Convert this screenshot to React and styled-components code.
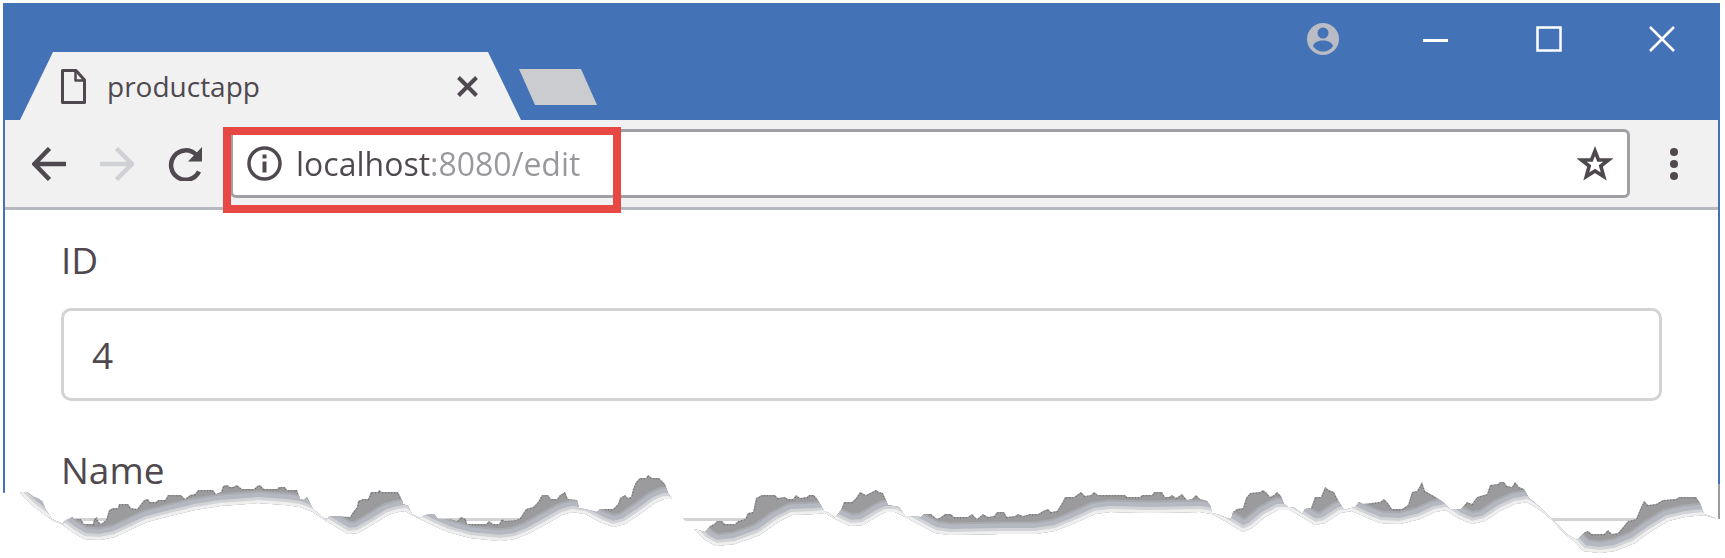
import React from "react";
import styled, { createGlobalStyle } from "styled-components";

const BLUE = "#4472b6";
const INK = "#4f494f";
const CHROME = "#f1f1f1";

const GlobalStyle = createGlobalStyle`
  *, *::before, *::after { box-sizing: border-box; }
  body {
    margin: 0;
    background: #fff;
    color: ${INK};
    font-family: "Open Sans", "Noto Sans", sans-serif;
  }
  button, input { font: inherit; color: inherit; }
`;

const Page = styled.div`
  position: relative;
  padding: 3px 5px 0 3px;
  overflow: hidden;
`;

const BrowserWindow = styled.div`
  border: solid ${BLUE};
  border-width: 0 2px;
`;

const TitleBar = styled.header`
  display: flex;
  align-items: flex-end;
  height: 117px;
  padding-left: 15px;
  background: ${BLUE};
`;

const IconButton = styled.button`
  display: flex;
  align-items: center;
  justify-content: center;
  flex: none;
  width: ${(p) => p.$width || "auto"};
  height: ${(p) => p.$height || "auto"};
  padding: 0;
  border: 0;
  background: none;
  color: ${(p) => p.$color || INK};
`;

const Tab = styled.div`
  display: flex;
  align-items: center;
  gap: 21px;
  flex: 0 1 501px;
  height: 68px;
  padding: 0 43px 0 41px;
  background: ${CHROME};
  clip-path: polygon(33px 0, calc(100% - 33px) 0, 100% 100%, 0 100%);
`;

const TabTitle = styled.span`
  flex: 1;
  font-size: 28px;
  line-height: 40px;
`;

const NewTab = styled.button`
  width: 78px;
  height: 36px;
  margin: 0 0 15px -2px;
  padding: 0;
  border: 0;
  background: #cbccd0;
  clip-path: polygon(0 0, 62px 0, 100% 100%, 16px 100%);
`;

const WindowControls = styled.div`
  display: flex;
  align-self: flex-start;
  margin-left: auto;
`;

const Toolbar = styled.div`
  display: flex;
  align-items: center;
  height: 90px;
  padding-left: 10px;
  background: ${CHROME};
  border-bottom: 3px solid #b6b9c0;
`;

const AddressBar = styled.div`
  position: relative;
  display: flex;
  align-items: center;
  flex: 1;
  height: 69px;
  margin-left: 11px;
  padding: 0 14px;
  background: #fff;
  border: 3px solid #a0a0a4;
  border-radius: 6px;
`;

const AddressInput = styled.input`
  flex: 1;
  min-width: 0;
  height: 48px;
  margin-left: 14px;
  padding: 0;
  border: 0;
  outline: 0;
  font-size: 32px;
  background: linear-gradient(to right, ${INK} 134px, #98979b 134px);
  background-clip: text;
  -webkit-text-fill-color: transparent;
`;

const Highlight = styled.div`
  position: absolute;
  top: -5px;
  left: -10px;
  width: 398px;
  height: 86px;
  border: 8px solid #e84844;
  pointer-events: none;
`;

const Form = styled.form`
  padding: 24px 56px 0;
`;

const Field = styled.div`
  margin-bottom: ${(p) => (p.$cut ? "0" : "43px")};
  height: ${(p) => (p.$cut ? "114px" : "auto")};
  overflow: ${(p) => (p.$cut ? "hidden" : "visible")};
`;

const Label = styled.label`
  display: block;
  margin-bottom: 22px;
  font-size: 37px;
  line-height: 52px;
`;

const TextInput = styled.input`
  display: block;
  width: 100%;
  height: 93px;
  padding: 0 28px;
  border: 3px solid #d3d3d5;
  border-radius: 10px;
  background: #fff;
  font-size: 37px;
`;

const TornPaper = styled.svg`
  position: absolute;
  left: 0;
  bottom: 0;
  display: block;
  width: 100%;
  height: 88px;
`;

/* Ragged upper side of the tear, as x,y pairs. */
const RAGGED = `20,492 27,492 34,497 37,498 42,501 46,510 52,519 63,524 68,520 72,517 74,519
81,519 84,524 93,524 94,519 97,517 98,521 101,524 106,520 109,510 113,508 118,508 119,504 128,504 131,508 137,509
141,504 144,500 148,499 150,502 156,502 158,500 165,500 168,495 181,495 185,499 190,495 195,494 198,490 213,490
216,494 221,492 223,486 227,485 230,487 233,487 237,485 242,489 254,489 257,486 260,485 264,489 277,489 279,487
285,487 287,490 297,490 300,499 304,500 307,497 310,503 313,509 326,520 330,516 350,517 353,512 357,507 358,501
363,499 368,499 371,492 378,492 379,490 382,492 398,492 402,500 403,504 408,506 412,514 420,518 425,515 434,514
438,519 450,519 457,521 461,517 466,519 467,524 486,524 489,521 493,524 499,524 502,519 505,521 516,520 520,518
526,509 533,507 538,502 542,495 548,495 551,499 557,499 560,495 565,492 568,499 577,500 579,508 589,510 597,512
600,509 613,509 618,504 620,498 625,495 628,498 631,497 633,489 636,482 640,478 646,478 648,475 652,478 659,478
665,484 668,493 672,499 680,516 694,529 705,532 710,526 714,524 717,521 722,521 725,524 735,524 738,521 745,519
748,513 753,512 756,498 762,495 775,495 778,498 785,497 788,499 793,499 796,495 800,498 807,497 809,495 814,495
818,500 824,511 829,513 835,518 841,510 844,502 852,502 856,498 860,492 866,495 872,492 876,490 879,492 883,493
888,505 899,507 905,516 921,517 924,514 931,514 937,519 941,517 945,514 951,514 954,517 968,517 972,514 977,519
983,514 988,517 994,516 997,512 1004,512 1007,517 1015,516 1018,514 1023,516 1030,514 1038,514 1043,511 1048,509
1051,512 1057,511 1062,503 1065,497 1074,497 1081,492 1085,496 1091,495 1094,492 1098,495 1125,495 1127,497 1140,497
1142,495 1152,495 1154,492 1162,492 1165,497 1169,497 1172,495 1176,498 1182,494 1187,500 1192,499 1196,495 1200,499
1207,501 1210,505 1212,513 1220,515 1231,520 1233,512 1237,509 1243,508 1246,498 1250,493 1260,492 1263,490 1267,493
1270,497 1274,495 1277,492 1281,496 1284,504 1288,507 1295,508 1302,514 1305,509 1311,508 1315,497 1321,497 1325,487
1329,490 1334,492 1338,500 1344,510 1355,507 1359,502 1363,504 1380,502 1384,499 1388,503 1392,509 1402,509 1408,505
1412,492 1417,491 1422,482 1425,491 1434,496 1443,502 1450,509 1461,509 1467,502 1472,504 1477,497 1487,494 1490,485
1498,484 1500,482 1504,482 1507,486 1512,487 1515,482 1519,487 1524,489 1529,498 1540,507 1552,519 1568,535 1577,540
1585,532 1588,531 1592,534 1604,534 1608,530 1612,534 1618,533 1628,521 1636,519 1641,507 1644,501 1648,505 1656,504
1663,500 1676,499 1679,497 1696,497 1700,503 1704,514 1718,519`;

/* Soft lower side of the shadow, over the same span. */
const SMOOTH = `20,493 33,506 52,520 63,525 72,532 84,539 100,540 115,537 130,530 147,522 170,516 195,510 220,506
258,503 285,505 300,507 313,512 326,521 336,527 348,534 358,533 372,525 388,515 398,512 405,511 412,515 420,519
432,525 448,532 470,538 500,541 515,539 530,533 548,523 562,515 572,512 585,514 600,522 613,527 625,524 640,514
655,503 664,499 672,499 680,516 694,529 705,540 716,546 735,544 760,535 778,522 792,515 815,514 825,513 835,519
850,526 863,525 878,516 886,512 895,512 905,517 920,525 935,533 950,535 1000,534 1035,534 1055,531 1075,523
1095,514 1110,512 1150,513 1200,512 1212,514 1225,521 1243,532 1252,528 1265,517 1278,510 1290,510 1302,517
1315,525 1325,523 1340,513 1352,511 1365,517 1380,523 1400,524 1420,519 1435,512 1446,510 1458,518 1472,524
1485,521 1500,511 1515,504 1527,502 1540,510 1552,520 1565,534 1575,542 1583,551 1600,553 1615,551 1635,543
1650,532 1668,521 1685,517 1704,515 1718,519`;

const reversedSmooth = SMOOTH.split(/\s+/).reverse().join(" ");

function TornEdge() {
  return (
    <TornPaper viewBox="0 470 1725 88" preserveAspectRatio="none" aria-hidden="true">
      <defs>
        <clipPath id="tear-shadow">
          <polygon points={`${RAGGED} ${reversedSmooth}`} />
        </clipPath>
      </defs>
      <polygon points={`0,493 ${RAGGED} 1725,519 1725,558 0,558`} fill="#fff" />
      <rect x="1718" y="484" width="2" height="35" fill="#9b9b9e" />
      <g clipPath="url(#tear-shadow)" fill="none" strokeLinejoin="round">
        <rect x="0" y="470" width="1725" height="88" fill="#9b9b9d" />
        <polyline points={RAGGED} stroke="#5d585e" strokeWidth="3" strokeDasharray="1 2" opacity="0.6" />
        <polyline points={SMOOTH} stroke="#a8aab0" strokeWidth="25" />
        <polyline points={SMOOTH} stroke="#b5b8c0" strokeWidth="21" />
        <polyline points={SMOOTH} stroke="#d2d3d6" strokeWidth="12" />
        <polyline points={SMOOTH} stroke="#efeff0" strokeWidth="6" />
      </g>
    </TornPaper>
  );
}

const FileIcon = () => (
  <svg width="25" height="35" viewBox="0 0 25 35" fill="none" stroke={INK} strokeWidth="3" strokeLinejoin="round">
    <path d="M1.5 1.5H15L23.5 11V33.5H1.5Z" />
    <path d="M14.5 2V11.5H23" strokeWidth="2.5" />
  </svg>
);

const CloseTabIcon = () => (
  <svg width="21" height="21" viewBox="0 0 21 21" stroke={INK} strokeWidth="4">
    <path d="M1.5 1.5L19.5 19.5M19.5 1.5L1.5 19.5" />
  </svg>
);

const AccountIcon = () => (
  <svg width="32" height="32" viewBox="0 0 32 32">
    <circle cx="16" cy="16" r="16" fill="#b9bcc4" />
    <circle cx="16" cy="10" r="5.5" fill={BLUE} />
    <path d="M6 23C7 19 12 17.5 16 17.5S25 19 26 23C24 26.5 20 28.5 16 28.5S8 26.5 6 23Z" fill={BLUE} />
  </svg>
);

const MinimizeIcon = () => (
  <svg width="26" height="26" viewBox="0 0 26 26" stroke="#fff" strokeWidth="3">
    <path d="M0 14.5H25" />
  </svg>
);

const MaximizeIcon = () => (
  <svg width="26" height="26" viewBox="0 0 26 26" fill="none" stroke="#fff" strokeWidth="2.5">
    <rect x="1.5" y="1.5" width="23" height="23" />
  </svg>
);

const CloseIcon = () => (
  <svg width="26" height="26" viewBox="0 0 26 26" stroke="#fff" strokeWidth="2.5">
    <path d="M1 1L25 25M25 1L1 25" />
  </svg>
);

const ArrowIcon = ({ forward }) => (
  <svg width="34" height="34" viewBox="0 0 34 34" fill="none" stroke="currentColor" strokeWidth="4.5">
    <path d={forward ? "M0 17H31M16.5 1.5L32 17L16.5 32.5" : "M34 17H3M17.5 1.5L2.5 17L17.5 32.5"} />
  </svg>
);

const ReloadIcon = () => (
  <svg width="34" height="34" viewBox="0 0 34 34" fill="none">
    <path d="M31 24.5A14.7 14.7 0 1 1 28 7.5" stroke="currentColor" strokeWidth="4.5" />
    <path d="M34 0V14.5H20Z" fill="currentColor" />
  </svg>
);

const InfoIcon = () => (
  <svg width="35" height="35" viewBox="0 0 35 35" fill="none" stroke={INK}>
    <circle cx="17.5" cy="17.5" r="15.5" strokeWidth="3.5" />
    <path d="M17.5 15.5V26.5" strokeWidth="4" />
    <path d="M17.5 8.5V12.5" strokeWidth="4" />
  </svg>
);

const StarIcon = () => (
  <svg width="36" height="36" viewBox="0 0 36 36" fill="none" stroke="currentColor" strokeWidth="3.6">
    <path d="M18 5L21.5 14H31.5L23.8 20L26.7 30.5L18 25L9.3 30.5L12.2 20L4.5 14H14.5Z" />
  </svg>
);

const MenuIcon = () => (
  <svg width="8" height="34" viewBox="0 0 8 34" fill="currentColor">
    <circle cx="4" cy="5" r="4" />
    <circle cx="4" cy="17" r="4" />
    <circle cx="4" cy="29" r="4" />
  </svg>
);

export default function App() {
  return (
    <>
      <GlobalStyle />
      <Page>
        <BrowserWindow>
          <TitleBar>
            <Tab>
              <FileIcon />
              <TabTitle>productapp</TabTitle>
              <IconButton aria-label="Close tab">
                <CloseTabIcon />
              </IconButton>
            </Tab>
            <NewTab aria-label="New tab" />
            <WindowControls>
              <IconButton $width="113px" $height="72px" aria-label="Account"><AccountIcon /></IconButton>
              <IconButton $width="113px" $height="72px" aria-label="Minimize"><MinimizeIcon /></IconButton>
              <IconButton $width="113px" $height="72px" aria-label="Maximize"><MaximizeIcon /></IconButton>
              <IconButton $width="113px" $height="72px" aria-label="Close"><CloseIcon /></IconButton>
            </WindowControls>
          </TitleBar>
          <Toolbar>
            <IconButton $width="68px" $height="68px" aria-label="Back"><ArrowIcon /></IconButton>
            <IconButton $width="68px" $height="68px" $color="#d0d1d5" aria-label="Forward"><ArrowIcon forward /></IconButton>
            <IconButton $width="68px" $height="68px" aria-label="Reload"><ReloadIcon /></IconButton>
            <AddressBar>
              <InfoIcon />
              <AddressInput type="text" aria-label="Address" defaultValue="localhost:8080/edit" />
              <IconButton aria-label="Bookmark this page"><StarIcon /></IconButton>
              <Highlight />
            </AddressBar>
            <IconButton $width="88px" $height="68px" aria-label="Menu"><MenuIcon /></IconButton>
          </Toolbar>
          <Form>
            <Field>
              <Label htmlFor="product-id">ID</Label>
              <TextInput id="product-id" type="text" defaultValue="4" />
            </Field>
            <Field $cut>
              <Label htmlFor="product-name">Name</Label>
              <TextInput id="product-name" type="text" />
            </Field>
          </Form>
        </BrowserWindow>
        <TornEdge />
      </Page>
    </>
  );
}
